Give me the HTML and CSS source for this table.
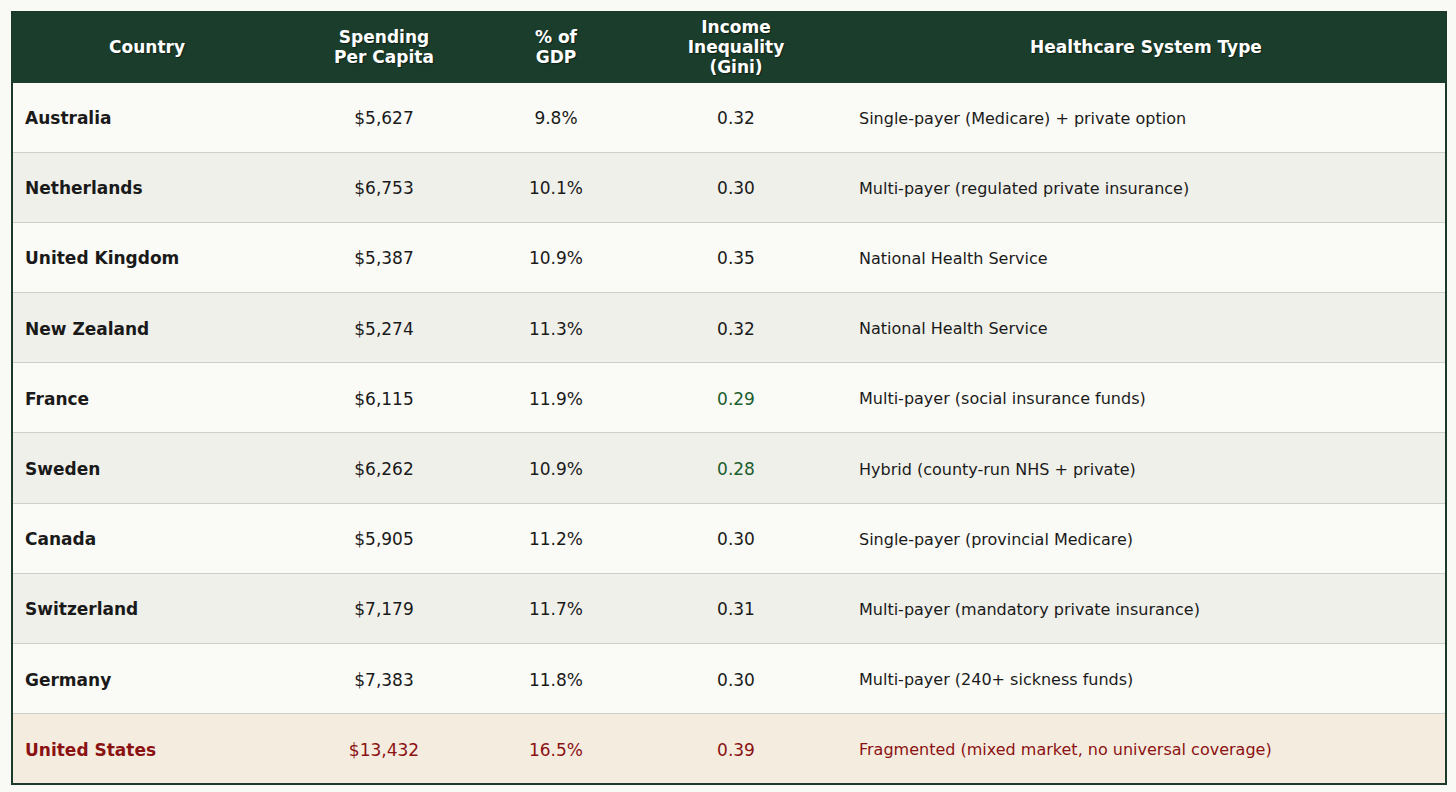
FILE: index.html
```html
<!DOCTYPE html>
<html>
<head>
<meta charset="utf-8">
<link rel="stylesheet" href="styles.css">
</head>
<body>
<table class="tbl">
  <colgroup>
    <col class="c1"><col class="c2"><col class="c3"><col class="c4"><col class="c5">
  </colgroup>
  <thead>
    <tr>
      <th>Country</th>
      <th>Spending<br>Per Capita</th>
      <th>% of<br>GDP</th>
      <th>Income<br>Inequality<br>(Gini)</th>
      <th>Healthcare System Type</th>
    </tr>
  </thead>
  <tbody>
    <tr><td class="name">Australia</td><td class="num">$5,627</td><td class="num">9.8%</td><td class="num">0.32</td><td class="type">Single-payer (Medicare) + private option</td></tr>
    <tr><td class="name">Netherlands</td><td class="num">$6,753</td><td class="num">10.1%</td><td class="num">0.30</td><td class="type">Multi-payer (regulated private insurance)</td></tr>
    <tr><td class="name">United Kingdom</td><td class="num">$5,387</td><td class="num">10.9%</td><td class="num">0.35</td><td class="type">National Health Service</td></tr>
    <tr><td class="name">New Zealand</td><td class="num">$5,274</td><td class="num">11.3%</td><td class="num">0.32</td><td class="type">National Health Service</td></tr>
    <tr><td class="name">France</td><td class="num">$6,115</td><td class="num">11.9%</td><td class="num good">0.29</td><td class="type">Multi-payer (social insurance funds)</td></tr>
    <tr><td class="name">Sweden</td><td class="num">$6,262</td><td class="num">10.9%</td><td class="num good">0.28</td><td class="type">Hybrid (county-run NHS + private)</td></tr>
    <tr><td class="name">Canada</td><td class="num">$5,905</td><td class="num">11.2%</td><td class="num">0.30</td><td class="type">Single-payer (provincial Medicare)</td></tr>
    <tr><td class="name">Switzerland</td><td class="num">$7,179</td><td class="num">11.7%</td><td class="num">0.31</td><td class="type">Multi-payer (mandatory private insurance)</td></tr>
    <tr><td class="name">Germany</td><td class="num">$7,383</td><td class="num">11.8%</td><td class="num">0.30</td><td class="type">Multi-payer (240+ sickness funds)</td></tr>
    <tr class="us"><td class="name">United States</td><td class="num">$13,432</td><td class="num">16.5%</td><td class="num">0.39</td><td class="type">Fragmented (mixed market, no universal coverage)</td></tr>
  </tbody>
</table>
</body>
</html>
```

FILE: styles.css
```css
html, body {
  margin: 0;
  padding: 0;
  background: #f9f9f5;
}
body {
  padding: 11px 9px 0 11px;
  font-family: "DejaVu Sans", sans-serif;
  color: #1a1a1a;
}
.tbl {
  width: 1436px;
  border-collapse: collapse;
  table-layout: fixed;
  border: 2px solid #1b3a2a;
}
.c1 { width: 269px; }
.c2 { width: 206px; }
.c3 { width: 138px; }
.c4 { width: 222px; }
.c5 { width: 599px; }
th {
  background: #1b3d2b;
  color: #ffffff;
  font-weight: bold;
  font-size: 17px;
  line-height: 20px;
  height: 71px;
  padding: 0 12px 2px;
  text-align: center;
  vertical-align: middle;
  text-shadow: 1px 1px 1px rgba(0,0,0,0.45);
  box-sizing: border-box;
}
td {
  height: 70.2px;
  padding: 2px 12px 0;
  font-size: 17px;
  vertical-align: middle;
  border-top: 1px solid #cfcfca;
  box-sizing: border-box;
}
tbody tr:first-child td { border-top: none; height: 69.2px; }
tbody tr:nth-child(odd) { background: #fafaf6; }
tbody tr:nth-child(even) { background: #f0f0eb; }
.name { font-weight: bold; }
.num { text-align: center; }
.type { font-size: 16px; }
.good { color: #1c5e2f; }
tbody tr.us { background: #f5ece0; }
tr.us td { color: #8b1212; }
```
